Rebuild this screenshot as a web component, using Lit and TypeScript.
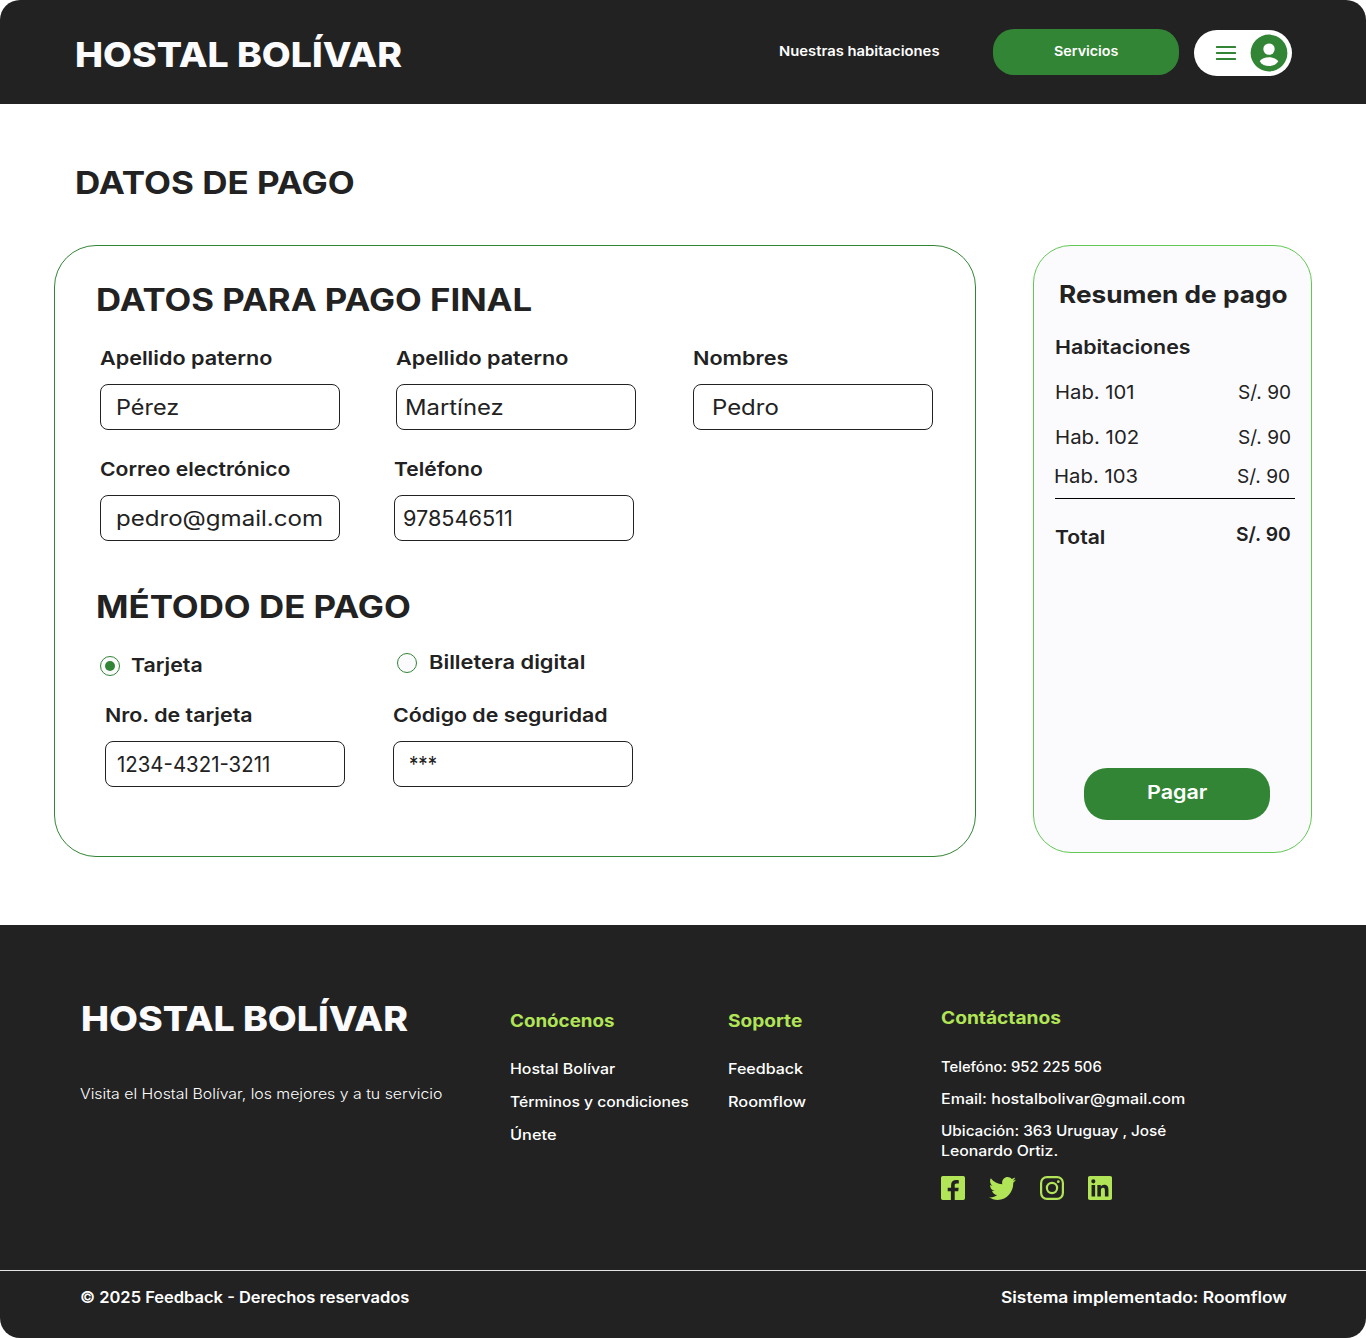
import { LitElement, html, svg, css } from "lit";
import { customElement, property } from "lit/decorators.js";
import { styleMap } from "lit/directives/style-map.js";

const wide = (text: string, ratio: number) =>
  html`<span class="wide" style=${styleMap({ "--ratio": String(ratio) })}>${text}</span>`;

const base = css`
  * {
    box-sizing: border-box;
  }
  h1,
  h2,
  h3,
  p,
  ul {
    margin: 0;
    padding: 0;
    list-style: none;
    font-weight: inherit;
    font-size: inherit;
  }
  svg {
    display: block;
  }
  .wide {
    display: inline-block;
    white-space: nowrap;
    transform: scaleX(var(--ratio, 1));
    transform-origin: 0 50%;
  }
`;

const LIME = "#b1e457";

const icons = {
  facebook: svg`<svg width="24" height="24" viewBox="0 0 24 24" fill=${LIME}><path d="M1.8 0h20.4A1.8 1.8 0 0 1 24 1.8v20.4a1.8 1.8 0 0 1-1.8 1.8h-8.5v-8.7h3.5l.5-3.5h-4V9.3c0-1.2.6-1.9 1.9-1.9h2.2V4.2c-.8-.1-1.6-.2-2.5-.2-3.2 0-5.2 1.8-5.2 5v2.8H6.7v3.5h3.2V24H1.8A1.8 1.8 0 0 1 0 22.2V1.8A1.8 1.8 0 0 1 1.8 0z"/></svg>`,
  twitter: svg`<svg width="27" height="23" viewBox="0 2.2 24 19.6" preserveAspectRatio="none" fill=${LIME}><path d="M23.954 4.569c-.885.389-1.83.654-2.825.775 1.014-.611 1.794-1.574 2.163-2.723-.951.555-2.005.959-3.127 1.184-.896-.959-2.173-1.559-3.591-1.559-2.717 0-4.92 2.203-4.92 4.917 0 .39.045.765.127 1.124C7.691 8.094 4.066 6.13 1.64 3.161c-.427.722-.666 1.561-.666 2.475 0 1.71.87 3.213 2.188 4.096-.807-.026-1.566-.248-2.228-.616v.061c0 2.385 1.693 4.374 3.946 4.827-.413.111-.849.171-1.296.171-.314 0-.615-.03-.916-.086.631 1.953 2.445 3.377 4.604 3.417-1.68 1.319-3.809 2.105-6.102 2.105-.39 0-.779-.023-1.17-.067 2.189 1.394 4.768 2.209 7.557 2.209 9.054 0 13.999-7.496 13.999-13.986 0-.209 0-.42-.015-.63.961-.689 1.8-1.56 2.46-2.548z"/></svg>`,
  instagram: svg`<svg width="24" height="24" viewBox="0 0 24 24" fill="none" stroke=${LIME} stroke-width="2.2"><rect x="1.1" y="1.1" width="21.8" height="21.8" rx="5.8"/><circle cx="12" cy="12" r="5.1"/><circle cx="18.3" cy="5.7" r="1.4" fill=${LIME} stroke="none"/></svg>`,
  linkedin: svg`<svg width="24" height="24" viewBox="0 0 24 24" fill=${LIME}><path d="M20.447 20.452h-3.554v-5.569c0-1.328-.027-3.037-1.852-3.037-1.853 0-2.136 1.445-2.136 2.939v5.667H9.351V9h3.414v1.561h.046c.477-.9 1.637-1.85 3.37-1.85 3.601 0 4.267 2.37 4.267 5.455v6.286zM5.337 7.433a2.062 2.062 0 0 1-2.063-2.065 2.064 2.064 0 1 1 2.063 2.065zm1.782 13.019H3.555V9h3.564v11.452zM22.225 0H1.771C.792 0 0 .774 0 1.729v20.542C0 23.227.792 24 1.771 24h20.451C23.2 24 24 23.227 24 22.271V1.729C24 .774 23.2 0 22.222 0h.003z"/></svg>`,
};

@customElement("site-header")
export class SiteHeader extends LitElement {
  static styles = [
    base,
    css`
      :host {
        display: block;
      }
      .bar {
        display: flex;
        align-items: flex-start;
        height: 104px;
        padding: 0 74px 0 75px;
        background: #222;
        color: #fbfbfe;
      }
      .brand {
        margin-top: 32px;
        font-weight: 800;
        font-size: 34.7px;
        line-height: 45px;
      }
      .nav {
        display: flex;
        align-items: flex-start;
        margin-left: auto;
        padding-top: 29px;
        font-weight: 600;
        font-size: 13.5px;
        color: #fff;
      }
      .link {
        width: 214px;
        line-height: 44px;
      }
      .button {
        width: 186px;
        height: 46px;
        padding-left: 61px;
        border-radius: 21px;
        background: #338536;
        line-height: 44px;
      }
      .account {
        display: flex;
        align-items: center;
        justify-content: space-between;
        width: 98px;
        height: 46px;
        margin: 1px 0 0 15px;
        padding: 0 4px 0 22px;
        border-radius: 23px;
        background: #fff;
      }
    `,
  ];
  render() {
    return html`<header class="bar">
      <div class="brand">${wide("HOSTAL BOLÍVAR", 1.08)}</div>
      <nav class="nav">
        <div class="link">${wide("Nuestras habitaciones", 1.097)}</div>
        <div class="button">${wide("Servicios", 1.059)}</div>
        <div class="account">
          <svg width="20" height="14" viewBox="0 0 20 14" fill="#338536">
            <rect width="20" height="2" rx=".6" />
            <rect y="6" width="20" height="2" rx=".6" />
            <rect y="12" width="20" height="2" rx=".6" />
          </svg>
          <svg width="38" height="38" viewBox="-19 -19 38 38">
            <circle r="18.4" fill="#338536" />
            <circle cy="-3.9" r="5.7" fill="#fff" />
            <path d="M-9.3 8.2C-7.5 5.6-4 4.2 0 4.2s7.5 1.4 9.3 4C7.3 11.5 3.8 13 0 13s-7.3-1.5-9.3-4.8z" fill="#fff" />
          </svg>
        </div>
      </nav>
    </header>`;
  }
}

@customElement("form-field")
export class FormField extends LitElement {
  @property() label = "";
  @property() value = "";
  @property({ type: Number }) labelRatio = 1;
  @property({ type: Number }) valueRatio = 1;
  @property({ type: Number }) inset = 14;
  static styles = [
    base,
    css`
      :host {
        display: block;
        width: 240px;
      }
      .label {
        margin-bottom: 14px;
        font-weight: 600;
        font-size: 19.3px;
        line-height: 24px;
      }
      .box {
        height: 46px;
        border: 1px solid #222;
        border-radius: 8px;
        background: #fff;
        font-weight: 400;
        font-size: 21.2px;
        line-height: 45px;
      }
    `,
  ];
  render() {
    return html`<div class="label">${wide(this.label, this.labelRatio)}</div>
      <div class="box" style=${styleMap({ paddingLeft: `${this.inset}px` })}>
        ${wide(this.value, this.valueRatio)}
      </div>`;
  }
}

type Field = [label: string, labelRatio: number, value: string, valueRatio: number, inset: number];

const names: Field[] = [
  ["Apellido paterno", 1.12, "Pérez", 1.105, 15],
  ["Apellido paterno", 1.12, "Martínez", 1.126, 8],
  ["Nombres", 1.121, "Pedro", 1.13, 17.5],
];
const contact: Field[] = [
  ["Correo electrónico", 1.096, "pedro@gmail.com", 1.136, 15],
  ["Teléfono", 1.091, "978546511", 1.022, 8.4],
];
const card: Field[] = [
  ["Nro. de tarjeta", 1.111, "1234-4321-3211", 0.963, 10.5],
  ["Código de seguridad", 1.107, "***", 0.88, 15],
];

@customElement("payment-form")
export class PaymentForm extends LitElement {
  static styles = [
    base,
    css`
      :host {
        display: block;
        width: 922px;
      }
      .card {
        height: 612px;
        padding: 34px 41px 0 45px;
        border: 1px solid #338536;
        border-radius: 42px;
        background: #fff;
      }
      .title {
        margin-left: -4.4px;
        font-weight: 700;
        font-size: 30.8px;
        line-height: 40px;
      }
      .second {
        margin-top: 46px;
      }
      .row {
        display: flex;
        margin-top: 27px;
      }
      .names {
        gap: 56px;
        margin-top: 26px;
      }
      .names :last-child {
        margin-left: 1px;
      }
      .contact {
        gap: 54px;
      }
      .pay {
        gap: 48px;
        margin-left: 5px;
      }
      .methods {
        display: flex;
        align-items: flex-start;
        height: 26px;
        margin-top: 23px;
        font-weight: 600;
        font-size: 19.3px;
        line-height: 24px;
      }
      .method {
        display: flex;
        gap: 12px;
        width: 297px;
      }
      .selected {
        gap: 11px;
        padding-top: 3px;
      }
      .radio {
        display: flex;
        align-items: center;
        justify-content: center;
        width: 20px;
        height: 20px;
        margin-top: 3px;
        border: 1px solid #338536;
        border-radius: 50%;
        background: #fbfbfe;
      }
      .dot {
        width: 10px;
        height: 10px;
        border-radius: 50%;
        background: #338536;
      }
    `,
  ];
  private fields(list: Field[], cls: string) {
    return html`<div class="row ${cls}">
      ${list.map(
        ([label, lr, value, vr, inset]) =>
          html`<form-field .label=${label} .labelRatio=${lr} .value=${value} .valueRatio=${vr} .inset=${inset}></form-field>`,
      )}
    </div>`;
  }
  render() {
    return html`<section class="card">
      <h2 class="title">${wide("DATOS PARA PAGO FINAL", 1.128)}</h2>
      ${this.fields(names, "names")} ${this.fields(contact, "contact")}
      <h2 class="title second">${wide("MÉTODO DE PAGO", 1.132)}</h2>
      <div class="methods">
        <div class="method selected">
          <span class="radio"><span class="dot"></span></span>${wide("Tarjeta", 1.107)}
        </div>
        <div class="method"><span class="radio"></span>${wide("Billetera digital", 1.134)}</div>
      </div>
      ${this.fields(card, "pay")}
    </section>`;
  }
}

@customElement("payment-summary")
export class PaymentSummary extends LitElement {
  static styles = [
    base,
    css`
      :host {
        display: block;
        width: 279px;
      }
      .card {
        display: flex;
        flex-direction: column;
        height: 608px;
        padding: 33px 16px 32px 21px;
        border: 1px solid #62c854;
        border-radius: 38px;
        background: #fbfbfe;
        font-weight: 400;
        font-size: 19.3px;
        line-height: 24px;
      }
      .title {
        margin-left: 3.8px;
        font-weight: 700;
        font-size: 24.1px;
        line-height: 32px;
      }
      .strong {
        font-weight: 600;
      }
      .heading {
        margin-top: 24px;
      }
      .row {
        display: flex;
      }
      .name {
        width: 183px;
      }
      .first,
      .second {
        margin-top: 21px;
      }
      .third {
        margin: 15px 0 10px -1px;
      }
      .total {
        margin-top: 23px;
      }
      .total .name {
        width: 181px;
        padding-top: 3px;
      }
      .rule {
        height: 1px;
        background: #000;
      }
      .button {
        width: 186px;
        height: 52px;
        margin: auto 0 0 29px;
        padding-left: 63px;
        border-radius: 23px;
        background: #338536;
        color: #fff;
        font-weight: 600;
        line-height: 49px;
      }
    `,
  ];
  render() {
    return html`<aside class="card">
      <h2 class="title">${wide("Resumen de pago", 1.088)}</h2>
      <h3 class="heading strong">${wide("Habitaciones", 1.108)}</h3>
      <div class="row first"><span class="name">${wide("Hab. 101", 1.05)}</span>${wide("S/. 90", 0.99)}</div>
      <div class="row second"><span class="name">${wide("Hab. 102", 1.056)}</span>${wide("S/. 90", 0.99)}</div>
      <div class="row third"><span class="name">${wide("Hab. 103", 1.052)}</span>${wide("S/. 90", 0.99)}</div>
      <div class="rule"></div>
      <div class="row total strong"><span class="name">${wide("Total", 1.095)}</span>${wide("S/. 90", 1)}</div>
      <div class="button">${wide("Pagar", 1.115)}</div>
    </aside>`;
  }
}

@customElement("site-footer")
export class SiteFooter extends LitElement {
  static styles = [
    base,
    css`
      :host {
        display: block;
      }
      .footer {
        height: 413px;
        background: #222;
        color: #fff;
        font-weight: 500;
        font-size: 14.4px;
        line-height: 20px;
      }
      .columns {
        display: flex;
        height: 345px;
        padding: 71px 80px 0;
      }
      .about {
        width: 430px;
        font-weight: 300;
      }
      .brand {
        margin: 0 0 43px 0.7px;
        color: #fbfbfe;
        font-weight: 800;
        font-size: 34.7px;
        line-height: 45px;
      }
      .list {
        display: flex;
        flex-direction: column;
        gap: 13px;
        padding-top: 13px;
      }
      .know {
        width: 218px;
      }
      .support {
        width: 213px;
      }
      .contact {
        gap: 12px;
        padding-top: 10px;
      }
      .heading {
        margin-bottom: 13px;
        color: #b1e457;
        font-weight: 700;
        font-size: 17.3px;
        line-height: 24px;
      }
      .contact .heading {
        margin-bottom: 15px;
      }
      .line {
        height: 20px;
      }
      .social {
        display: flex;
        align-items: center;
        gap: 24px;
        margin-top: 3px;
      }
      .legal {
        display: flex;
        height: 68px;
        padding: 16px 80px 0;
        border-top: 1px solid #e3e3e5;
        font-weight: 600;
        font-size: 15.4px;
        line-height: 22px;
      }
      .copy {
        width: 921px;
      }
    `,
  ];
  private line(text: string, ratio: number) {
    return html`<li class="line">${wide(text, ratio)}</li>`;
  }
  render() {
    return html`<footer class="footer">
      <div class="columns">
        <div class="about">
          <div class="brand">${wide("HOSTAL BOLÍVAR", 1.08)}</div>
          <p>${wide("Visita el Hostal Bolívar, los mejores y a tu servicio", 1.101)}</p>
        </div>
        <ul class="list know">
          <li class="heading">${wide("Conócenos", 1.086)}</li>
          ${this.line("Hostal Bolívar", 1.107)} ${this.line("Términos y condiciones", 1.092)} ${this.line("Únete", 1.135)}
        </ul>
        <ul class="list support">
          <li class="heading">${wide("Soporte", 1.105)}</li>
          ${this.line("Feedback", 1.115)} ${this.line("Roomflow", 1.135)}
        </ul>
        <ul class="list contact">
          <li class="heading">${wide("Contáctanos", 1.108)}</li>
          ${this.line("Telefóno: 952 225 506", 1.027)} ${this.line("Email: hostalbolivar@gmail.com", 1.115)}
          <li>
            <div class="line">${wide("Ubicación: 363 Uruguay , José", 1.063)}</div>
            <div class="line">${wide("Leonardo Ortiz.", 1.1)}</div>
          </li>
          <li class="social">${icons.facebook}${icons.twitter}${icons.instagram}${icons.linkedin}</li>
        </ul>
      </div>
      <div class="legal">
        <span class="copy">${wide("© 2025 Feedback - Derechos reservados", 1.071)}</span>
        ${wide("Sistema implementado: Roomflow", 1.13)}
      </div>
    </footer>`;
  }
}

@customElement("app-root")
export class AppRoot extends LitElement {
  static styles = [
    base,
    css`
      :host {
        display: block;
        background: #fff;
        color: #222;
        font-family: Inter, "Open Sans", sans-serif;
      }
      .page {
        width: 1366px;
        height: 1338px;
        overflow: hidden;
        border-radius: 20px;
        background: #fff;
      }
      .main {
        height: 821px;
        padding: 59px 54px 0;
      }
      .title {
        margin: 0 0 42px 20.6px;
        font-weight: 700;
        font-size: 30.8px;
        line-height: 40px;
      }
      .content {
        display: flex;
        align-items: flex-start;
        gap: 57px;
      }
    `,
  ];
  render() {
    return html`<div class="page">
      <site-header></site-header>
      <main class="main">
        <h1 class="title">${wide("DATOS DE PAGO", 1.136)}</h1>
        <div class="content">
          <payment-form></payment-form>
          <payment-summary></payment-summary>
        </div>
      </main>
      <site-footer></site-footer>
    </div>`;
  }
}
